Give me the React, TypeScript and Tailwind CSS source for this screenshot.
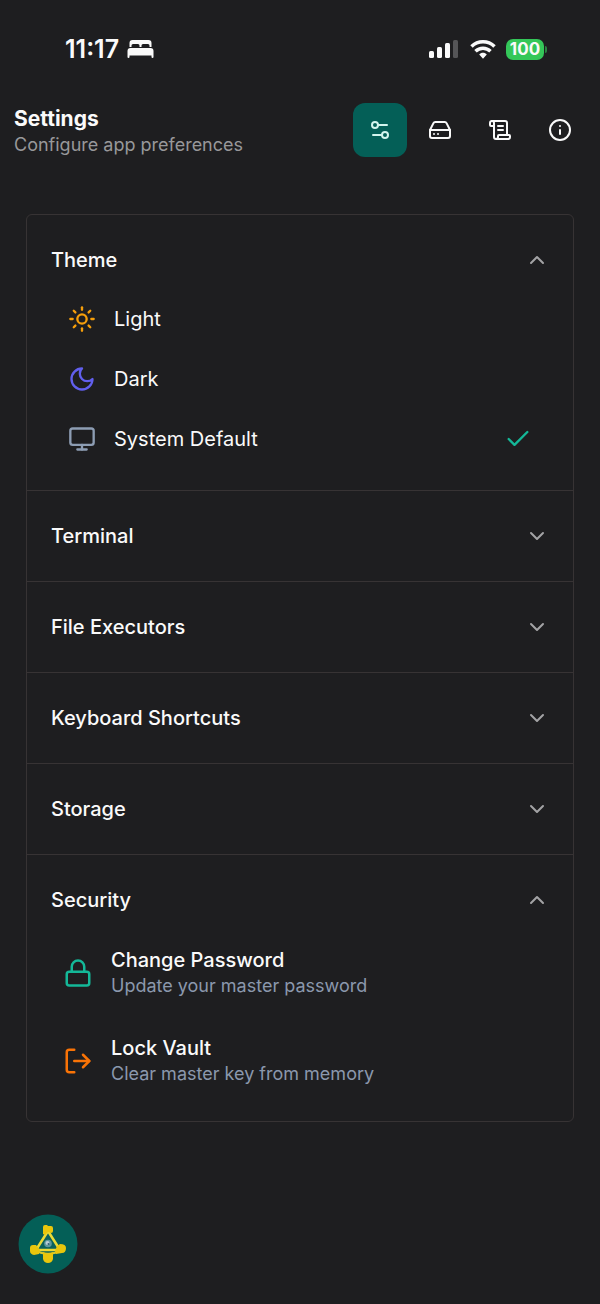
import { useState, type ReactNode } from "react";
import { Check, ChevronDown, ChevronUp, HardDrive, Info, Lock, LogOut, Monitor, ScrollText, Settings2, Sun } from "lucide-react";

const TABS = [
  { id: "preferences", label: "Preferences", Icon: Settings2 },
  { id: "storage", label: "Connections", Icon: HardDrive },
  { id: "logs", label: "Logs", Icon: ScrollText },
  { id: "about", label: "About", Icon: Info },
];

function MoonIcon() {
  return (
    <svg width="28" height="28" viewBox="0 0 24 24" fill="none" stroke="currentColor" strokeWidth="2" strokeLinecap="round" strokeLinejoin="round" className="text-[#615fee]">
      <path d="M12 3a6 6 0 0 0 9 9 9 9 0 1 1-9-9Z" />
    </svg>
  );
}

const THEMES = [
  { id: "light", label: "Light", icon: <Sun size={28} className="text-[#f59e0b]" /> },
  { id: "dark", label: "Dark", icon: <MoonIcon /> },
  { id: "system", label: "System Default", icon: <Monitor size={28} className="text-[#8d9db3]" /> },
];

const ACTIONS = [
  {
    title: "Change Password",
    detail: "Update your master password",
    icon: <Lock size={30} className="text-[#14b898]" />,
  },
  {
    title: "Lock Vault",
    detail: "Clear master key from memory",
    icon: <LogOut size={30} className="text-[#f97306]" />,
  },
];

function StatusBar() {
  return (
    <div className="flex h-[98px] items-center justify-between pl-[65px] pr-[53px]">
      <div className="flex items-center gap-2">
        <span className="text-[25px] font-semibold leading-7">11:17</span>
        {/* Sleep focus */}
        <svg width="27" height="18" viewBox="0 0 26 18" fill="currentColor">
          <path d="M2 7V3a3 3 0 0 1 3-3h16a3 3 0 0 1 3 3v4h-2V5.500a1.500 1.500 0 0 0-1.500-1.500H15.500A1.500 1.500 0 0 0 14 5.500V7h-2V5.500A1.500 1.500 0 0 0 10.500 4H5.500A1.500 1.500 0 0 0 4 5.500V7z" />
          <path d="M3 8h20a3 3 0 0 1 3 3v6a1 1 0 0 1-2 0v-1.500H2V17a1 1 0 0 1-2 0v-6a3 3 0 0 1 3-3z" />
        </svg>
      </div>
      <div className="flex items-center">
        <svg width="29" height="18" viewBox="0 0 29 18" fill="currentColor">
          <rect x="0" y="11" width="5" height="7" rx="1.500" />
          <rect x="8" y="7" width="5" height="11" rx="1.500" />
          <rect x="16" y="3" width="5" height="15" rx="1.500" />
          <rect x="24" y="0" width="5" height="18" rx="1.500" opacity="0.25" />
        </svg>
        <svg width="26" height="19" viewBox="0 0 26 19" fill="none" stroke="currentColor" strokeWidth="3.500" className="ml-3">
          <path d="M1.500 6.500a16.500 16.500 0 0 1 23 0" />
          <path d="M5.500 11.300a10.800 10.800 0 0 1 15 0" />
          <path d="M13 12.800c-1.500 0-2.800.6-3.800 1.600L13 18.800l3.800-4.400c-1-1-2.300-1.600-3.800-1.600z" fill="currentColor" stroke="none" />
        </svg>
        <span className="ml-2.5 flex h-[21px] w-[38px] items-center justify-center rounded-[7px] bg-[#34c759] text-[17px] font-bold leading-5">100</span>
        <span className="ml-px h-[7px] w-0.5 rounded-r-full bg-[#34c759]/60" />
      </div>
    </div>
  );
}

function Section({ title, defaultOpen = false, children }: { title: string; defaultOpen?: boolean; children?: ReactNode }) {
  const [open, setOpen] = useState(defaultOpen);
  const expanded = open && !!children;
  const Chevron = expanded ? ChevronUp : ChevronDown;

  return (
    <section className="border-b border-[#373334] last:border-b-0">
      <h2>
        <button
          type="button"
          aria-expanded={expanded}
          onClick={() => setOpen(!open)}
          className={`flex w-full items-center justify-between px-6 text-left text-xl font-medium ${expanded ? "h-[74px] pt-4" : "h-[90px]"}`}
        >
          {title}
          <Chevron size={24} className="text-[#a3a3a5]" />
        </button>
      </h2>
      {expanded && children}
    </section>
  );
}

function Logo() {
  return (
    <svg width="60" height="60" viewBox="0 0 60 60">
      <circle cx="30" cy="30" r="29.500" fill="#045f57" />
      <path d="M30 17 18 36h24z" fill="#0a615c" stroke="#eadb36" strokeWidth="2.500" strokeLinejoin="round" />
      <path d="M18 36c5 5 19 5 24 0" fill="none" stroke="#d9c92c" strokeWidth="2" />
      <g fill="#e9c60c">
        <path d="M25 13q0-2 2-2h2l1 1h3q2 0 2 2v3q0 2-2 2l-3-1-3 3-2-1z" />
        <path d="M12 34q0-3 3-3h3l4 5-1 4-5 1q-4-1-4-4z" />
        <path d="M39 32l3-2q6 0 6 4 0 5-4 5l-6 1-1-3z" />
        <path d="M25 38l5 2 5-2v7q-1 4-5 4t-5-4z" />
      </g>
      <circle cx="30" cy="29.500" r="3.800" fill="#5d979d" />
      <circle cx="29.500" cy="29" r="2" fill="#b9ced8" />
      <circle cx="30.500" cy="30" r="1" fill="#335f78" />
    </svg>
  );
}

export default function App() {
  const [tab, setTab] = useState("preferences");
  const [theme, setTheme] = useState("system");

  return (
    <div className="flex min-h-screen flex-col bg-[#1e1e20] font-[Inter,sans-serif] text-[#fafafa]">
      <StatusBar />

      <header className="flex items-start justify-between pl-3.5 pr-[13px] pt-[5px]">
        <div className="pt-[3px]">
          <h1 className="text-[21px] font-bold leading-[26px]">Settings</h1>
          <p className="text-lg leading-[26px] text-[#98989a]">Configure app preferences</p>
        </div>
        <nav className="flex gap-1.5">
          {TABS.map(({ id, label, Icon }) => (
            <button
              key={id}
              type="button"
              aria-label={label}
              onClick={() => setTab(id)}
              className={`flex size-[54px] items-center justify-center rounded-xl ${tab === id ? "bg-[#045f57] text-[#d3f5ee]" : ""}`}
            >
              <Icon size={24} />
            </button>
          ))}
        </nav>
      </header>

      <main className="px-[26px] pt-14">
        <div className="rounded-md border border-[#373334]">
          <Section title="Theme" defaultOpen>
            <ul className="pb-[21px]">
              {THEMES.map((t) => (
                <li key={t.id}>
                  <button
                    type="button"
                    aria-pressed={theme === t.id}
                    onClick={() => setTheme(t.id)}
                    className="flex h-[60px] w-full items-center gap-[18px] px-[41px] text-left text-xl"
                  >
                    {t.icon}
                    <span className="flex-1">{t.label}</span>
                    {theme === t.id && <Check size={28} className="text-[#14b898]" />}
                  </button>
                </li>
              ))}
            </ul>
          </Section>
          <Section title="Terminal" />
          <Section title="File Executors" />
          <Section title="Keyboard Shortcuts" />
          <Section title="Storage" />
          <Section title="Security" defaultOpen>
            <ul className="pb-4">
              {ACTIONS.map((a) => (
                <li key={a.title}>
                  <button type="button" className="flex h-[88px] w-full items-center gap-[18px] px-9 text-left">
                    {a.icon}
                    <span className="flex flex-col">
                      <span className="text-xl font-medium leading-[26px]">{a.title}</span>
                      <span className="text-lg leading-[26px] text-[#8b98ad]">{a.detail}</span>
                    </span>
                  </button>
                </li>
              ))}
            </ul>
          </Section>
        </div>
      </main>

      <footer className="mt-auto px-[18px] pb-[30px] pt-10">
        <button type="button" aria-label="Open menu" className="block rounded-full">
          <Logo />
        </button>
      </footer>
    </div>
  );
}
